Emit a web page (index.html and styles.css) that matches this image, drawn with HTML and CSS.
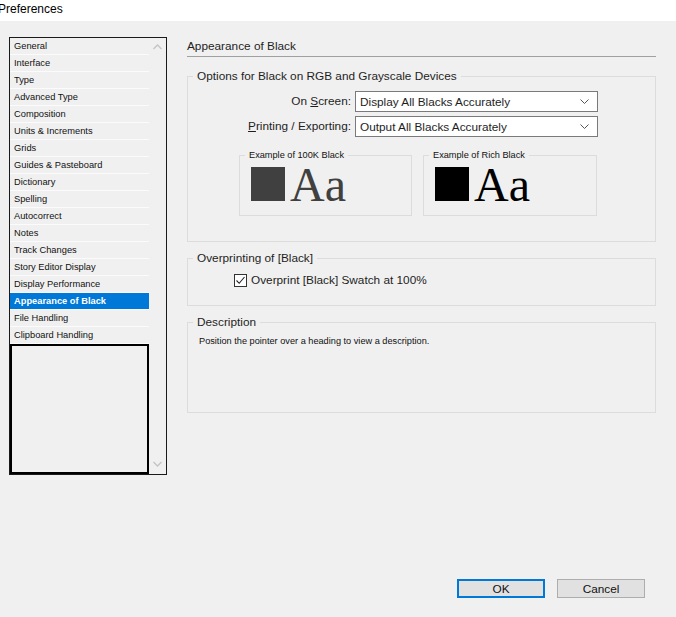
FILE: index.html
```html
<!DOCTYPE html>
<html lang="en">
<head>
    <meta charset="UTF-8">
    <meta name="viewport" content="width=device-width, initial-scale=1.0">
    <title>Preferences</title>
    <link rel="stylesheet" href="styles.css">
</head>
<body>
    <div class="titlebar">
        <span class="title">Preferences</span>
    </div>

    <div class="window">
        <div class="main">
            <!-- lista de categorias -->
            <div class="sidebar">
                <div class="list-col">
                    <ul class="list">
                        <li>General</li>
                        <li>Interface</li>
                        <li>Type</li>
                        <li>Advanced Type</li>
                        <li>Composition</li>
                        <li>Units &amp; Increments</li>
                        <li>Grids</li>
                        <li>Guides &amp; Pasteboard</li>
                        <li>Dictionary</li>
                        <li>Spelling</li>
                        <li>Autocorrect</li>
                        <li>Notes</li>
                        <li>Track Changes</li>
                        <li>Story Editor Display</li>
                        <li>Display Performance</li>
                        <li class="selected">Appearance of Black</li>
                        <li>File Handling</li>
                        <li>Clipboard Handling</li>
                    </ul>
                    <div class="list-empty"></div>
                </div>
                <div class="scrollbar">
                    <svg width="9" height="6" viewBox="0 0 9 6"><polyline points="0.5,5 4.5,1 8.5,5" fill="none" stroke="#c4c4c4" stroke-width="1.3"/></svg>
                    <svg width="9" height="6" viewBox="0 0 9 6"><polyline points="0.5,1 4.5,5 8.5,1" fill="none" stroke="#c4c4c4" stroke-width="1.3"/></svg>
                </div>
            </div>

            <div class="panel">
                <h1 class="panel-title">Appearance of Black</h1>

                <fieldset class="group group-options">
                    <legend>Options for Black on RGB and Grayscale Devices</legend>
                    <div class="field-grid">
                        <label>On <u>S</u>creen:</label>
                        <div class="select">
                            <span>Display All Blacks Accurately</span>
                            <svg width="9" height="5" viewBox="0 0 9 5"><polyline points="0.5,0.5 4.5,4.5 8.5,0.5" fill="none" stroke="#555" stroke-width="1"/></svg>
                        </div>
                        <label><u>P</u>rinting / Exporting:</label>
                        <div class="select">
                            <span>Output All Blacks Accurately</span>
                            <svg width="9" height="5" viewBox="0 0 9 5"><polyline points="0.5,0.5 4.5,4.5 8.5,0.5" fill="none" stroke="#555" stroke-width="1"/></svg>
                        </div>
                    </div>

                    <div class="examples">
                        <fieldset class="example">
                            <legend>Example of 100K Black</legend>
                            <div class="example-row">
                                <span class="swatch swatch-100k"></span>
                                <span class="sample sample-100k">Aa</span>
                            </div>
                        </fieldset>
                        <fieldset class="example">
                            <legend>Example of Rich Black</legend>
                            <div class="example-row">
                                <span class="swatch swatch-rich"></span>
                                <span class="sample">Aa</span>
                            </div>
                        </fieldset>
                    </div>
                </fieldset>

                <fieldset class="group group-overprint">
                    <legend>Overprinting of [Black]</legend>
                    <div class="check-row">
                        <span class="checkbox">
                            <svg width="11" height="11" viewBox="0 0 11 11"><polyline points="1.5,5.5 4.2,8.3 9.5,2" fill="none" stroke="#222" stroke-width="1.1"/></svg>
                        </span>
                        <span>Overprint [Black] Swatch at 100%</span>
                    </div>
                </fieldset>

                <fieldset class="group group-description">
                    <legend>Description</legend>
                    <p class="description">Position the pointer over a heading to view a description.</p>
                </fieldset>
            </div>
        </div>

        <div class="footer">
            <button class="btn btn-default">OK</button>
            <button class="btn">Cancel</button>
        </div>
    </div>
</body>
</html>
```

FILE: styles.css
```css
body {
    margin: 0;
    background: #f0f0f0;
    font-family: 'Liberation Sans', Arial, sans-serif;
    color: #000;
    overflow: hidden;
}

.titlebar {
    height: 21px;
    background: #fff;
    font-size: 12px;
    line-height: 18px;
}

.title {
    margin-left: -2px;
}

.window {
    height: 596px;
    display: flex;
    flex-direction: column;
}

.main {
    display: flex;
    align-items: flex-start;
    padding: 16px 0 0 9px;
}

/* lista lateral */
.sidebar {
    width: 156px;
    height: 436px;
    border: 1px solid #1a1a1a;
    display: flex;
}

.list-col {
    width: 139px;
    display: flex;
    flex-direction: column;
}

.list {
    list-style: none;
    margin: 0;
    padding: 0;
}

.list li {
    height: 16px;
    line-height: 16px;
    padding-left: 4px;
    font-size: 9.3px;
    color: #111;
    border-bottom: 1px solid #fbfbfb;
    white-space: nowrap;
}

.list li.selected {
    background: #0078d7;
    color: #fff;
    font-weight: bold;
}

.list-empty {
    height: 126px;
    border: 2px solid #000;
}

.scrollbar {
    width: 17px;
    display: flex;
    flex-direction: column;
    justify-content: space-between;
    align-items: center;
    padding: 6px 0 7px;
}

/* painel da direita */
.panel {
    margin-left: 20px;
    width: 469px;
    padding-top: 2px;
    font-size: 11.8px;
    color: #1e1e1e;
}

.panel-title {
    margin: 0;
    font-size: 11.8px;
    font-weight: normal;
    line-height: 15px;
    padding-bottom: 2px;
    border-bottom: 1px solid #a0a0a0;
}

.group {
    margin: 0;
    padding: 0;
    border: 1px solid #dcdcdc;
    min-inline-size: 0;
}

.group legend {
    margin-left: 5px;
    padding: 0 4px;
    line-height: 15px;
}

.group-options {
    margin-top: 12px;
    padding-top: 7px;
    padding-bottom: 25px;
}

.field-grid {
    display: grid;
    grid-template-columns: 163px 243px;
    grid-auto-rows: 21px;
    column-gap: 4px;
    row-gap: 4px;
}

.field-grid label {
    text-align: right;
    line-height: 21px;
}

.select {
    background: #fff;
    border: 1px solid #7a7a7a;
    display: flex;
    align-items: center;
    justify-content: space-between;
    padding: 0 8px 0 4px;
}

.examples {
    display: flex;
    gap: 11px;
    margin-top: 13px;
    margin-left: 51px;
}

.example {
    box-sizing: border-box;
    margin: 0;
    width: 173px;
    padding: 6px 0 14px 11px;
    border: 1px solid #dcdcdc;
    min-inline-size: 0;
}

.example + .example {
    width: 174px;
}

.example legend {
    margin-left: -6px;
    padding: 0 4px;
    font-size: 9.2px;
    line-height: 11px;
    color: #111;
}

.example-row {
    display: flex;
    align-items: flex-end;
    height: 34px;
}

.swatch {
    width: 34px;
    height: 34px;
}

.swatch-100k {
    background: #404040;
}

.swatch-rich {
    background: #000;
}

.sample {
    margin-left: 5px;
    font-family: 'Liberation Serif', 'Times New Roman', serif;
    font-size: 48px;
    line-height: 33px;
    color: #000;
}

.sample-100k {
    color: #404040;
}

.group-overprint {
    margin-top: 9px;
    padding: 6px 0 17px 46px;
}

.group-overprint legend {
    margin-left: -41px;
}

.check-row {
    display: flex;
    align-items: center;
    gap: 4px;
    height: 16px;
}

.checkbox {
    width: 11px;
    height: 11px;
    border: 1px solid #333;
    background: #fff;
    display: flex;
}

.group-description {
    margin-top: 9px;
    padding: 6px 0 65px 11px;
}

.group-description legend {
    margin-left: -6px;
}

.description {
    margin: 0;
    font-size: 9.2px;
    line-height: 11px;
    color: #111;
}

/* botões */
.footer {
    margin-top: auto;
    display: flex;
    justify-content: flex-end;
    gap: 12px;
    padding: 0 31px 19px 0;
}

.btn {
    width: 88px;
    height: 19px;
    padding: 0;
    background: #e1e1e1;
    border: 1px solid #adadad;
    font-family: 'Liberation Sans', Arial, sans-serif;
    font-size: 11.8px;
    color: #111;
}

.btn-default {
    border: 2px solid #0078d7;
}
```
